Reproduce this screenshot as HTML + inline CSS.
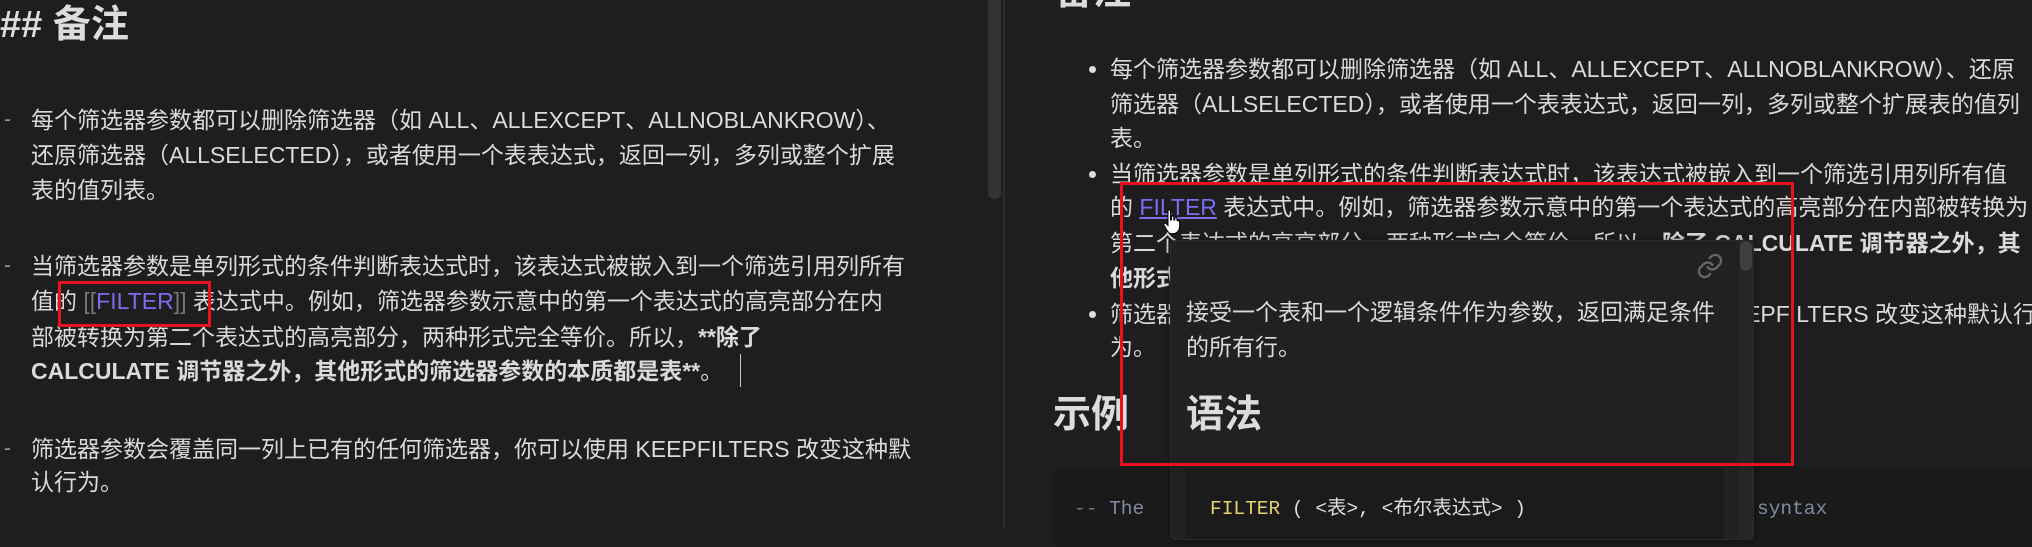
<!DOCTYPE html>
<html><head><meta charset="utf-8"><style>
*{margin:0;padding:0;box-sizing:border-box}
body{width:2032px;height:529px;overflow:hidden;background:#1e1e1e;position:relative;font-family:"Liberation Sans","Noto Sans CJK SC",sans-serif;color:#dadada}
.t{position:absolute;white-space:nowrap;font-size:23px;line-height:36px}
.h{position:absolute;white-space:nowrap;font-size:38px;font-weight:bold;color:#dcdcdc;line-height:46px}
b{font-weight:bold}
.dash{position:absolute;color:#999;font-size:21px;line-height:36px}
.dot{position:absolute;width:7px;height:7px;border-radius:50%;background:#dcddde}
.br{color:#777}
.lk{color:#7b6cf0}
.red{position:absolute;border:3px solid #e8121f}
.mono{font-family:"Liberation Mono","Noto Sans CJK SC",monospace}
</style></head><body>
<!-- left pane -->
<div class="h" style="left:0;top:2px">## 备注</div>
<div class="dash" style="left:4px;top:102px">-</div>
<div class="t" style="left:31px;top:102px">每个筛选器参数都可以删除筛选器（如 ALL、ALLEXCEPT、ALLNOBLANKROW）、</div>
<div class="t" style="left:31px;top:137px">还原筛选器（ALLSELECTED），或者使用一个表表达式，返回一列，多列或整个扩展</div>
<div class="t" style="left:31px;top:172px">表的值列表。</div>
<div class="dash" style="left:4px;top:248px">-</div>
<div class="t" style="left:31px;top:248px">当筛选器参数是单列形式的条件判断表达式时，该表达式被嵌入到一个筛选引用列所有</div>
<div class="t" style="left:31px;top:283px">值的 <span class="br">[[</span><span class="lk">FILTER</span><span class="br">]]</span> 表达式中。例如，筛选器参数示意中的第一个表达式的高亮部分在内</div>
<div class="t" style="left:31px;top:319px">部被转换为第二个表达式的高亮部分，两种形式完全等价。所以，<b>**除了</b></div>
<div class="t" style="left:31px;top:353px"><b>CALCULATE 调节器之外，其他形式的筛选器参数的本质都是表**</b>。</div>
<div style="position:absolute;left:740px;top:354px;width:1px;height:33px;background:#ccc"></div>
<div class="dash" style="left:4px;top:431px">-</div>
<div class="t" style="left:31px;top:431px">筛选器参数会覆盖同一列上已有的任何筛选器，你可以使用 KEEPFILTERS 改变这种默</div>
<div class="t" style="left:31px;top:464px">认行为。</div>
<div class="red" style="left:58px;top:281px;width:153px;height:46px"></div>
<div style="position:absolute;left:988px;top:0;width:13px;height:199px;background:#333;border-radius:0 0 6px 6px"></div>
<div style="position:absolute;left:1003px;top:0;width:2px;height:529px;background:#2c2c2c"></div>
<!-- right pane -->
<div class="h" style="left:1055px;top:-31px">备注</div>
<div class="dot" style="left:1089px;top:66px"></div>
<div class="t" style="left:1110px;top:51px">每个筛选器参数都可以删除筛选器（如 ALL、ALLEXCEPT、ALLNOBLANKROW）、还原</div>
<div class="t" style="left:1110px;top:86px">筛选器（ALLSELECTED），或者使用一个表表达式，返回一列，多列或整个扩展表的值列</div>
<div class="t" style="left:1110px;top:120px">表。</div>
<div class="dot" style="left:1089px;top:171px"></div>
<div class="t" style="left:1110px;top:156px">当筛选器参数是单列形式的条件判断表达式时，该表达式被嵌入到一个筛选引用列所有值</div>
<div class="t" style="left:1110px;top:189px">的 <span class="lk" style="text-decoration:underline">FILTER</span> 表达式中。例如，筛选器参数示意中的第一个表达式的高亮部分在内部被转换为</div>
<div class="t" style="left:1110px;top:225px">第二个表达式的高亮部分，两种形式完全等价。所以，<b>除了 CALCULATE 调节器之外，其</b></div>
<div class="t" style="left:1110px;top:260px"><b>他形式的筛选器参数的本质都是表</b>。</div>
<div class="dot" style="left:1089px;top:311px"></div>
<div class="t" style="left:1110px;top:296px">筛选器参数会覆盖同一列上已有的任何筛选器，你可以使用 KEEPFILTERS 改变这种默认行</div>
<div class="t" style="left:1110px;top:329px">为。</div>
<div class="h" style="left:1053px;top:392px">示例</div>
<div style="position:absolute;left:1053px;top:467px;width:990px;height:80px;background:#1a1a1a;border-radius:6px"></div>
<div class="t mono" style="left:1074px;top:491px;font-size:19.5px;color:#6e7681">--  <span style="color:#7f8ba0">The</span></div>
<div class="t mono" style="left:1757px;top:491px;font-size:19.5px;color:#7f8ba0">syntax</div>
<!-- popup -->
<div style="position:absolute;left:1170px;top:240px;width:584px;height:300px;background:#212121;border:1px solid #2a2a2a;border-radius:6px;box-shadow:0 0 8px rgba(0,0,0,.4)"></div>
<div style="position:absolute;left:1739px;top:240px;width:14px;height:300px;background:#262626"></div>
<div style="position:absolute;left:1740px;top:241px;width:12px;height:30px;background:#3f3f3f;border-radius:6px"></div>
<svg style="position:absolute;left:1696px;top:252px" width="28" height="28" viewBox="0 0 24 24" fill="none" stroke="#666" stroke-width="2" stroke-linecap="round"><path d="M10 13a5 5 0 0 0 7.5.5l3-3a5 5 0 0 0-7-7l-1.7 1.7"/><path d="M14 11a5 5 0 0 0-7.5-.5l-3 3a5 5 0 0 0 7 7l1.7-1.7"/></svg>
<div class="t" style="left:1186px;top:294px">接受一个表和一个逻辑条件作为参数，返回满足条件</div>
<div class="t" style="left:1186px;top:329px">的所有行。</div>
<div class="h" style="left:1186px;top:392px">语法</div>
<div style="position:absolute;left:1186px;top:469px;width:538px;height:70px;background:#1b1b1b"></div>
<div class="t mono" style="left:1210px;top:491px;font-size:19.5px;color:#ddd"><span style="color:#e5d36b">FILTER</span> ( &lt;表&gt;, &lt;布尔表达式&gt; )</div>
<div class="red" style="left:1120px;top:182px;width:674px;height:284px"></div>
<!-- cursor hand -->
<svg style="position:absolute;left:1163px;top:209px" width="18" height="26" viewBox="0 0 18 26"><path d="M5 2c0-1.5 2.5-1.5 2.5 0v9l1-.2V8c0-1.3 2.3-1.3 2.3 0v3l1-.1V9.5c0-1.3 2.2-1.3 2.2 0v2l.8.1c1.2 0 1.8.8 1.8 2v4c0 3-2 6-5 7H8c-2 0-3-2-4.5-4L1 16c-.8-1.2.7-2.5 1.8-1.5L5 16.5z" fill="#fff" stroke="#000" stroke-width="1"/></svg>
</body></html>
